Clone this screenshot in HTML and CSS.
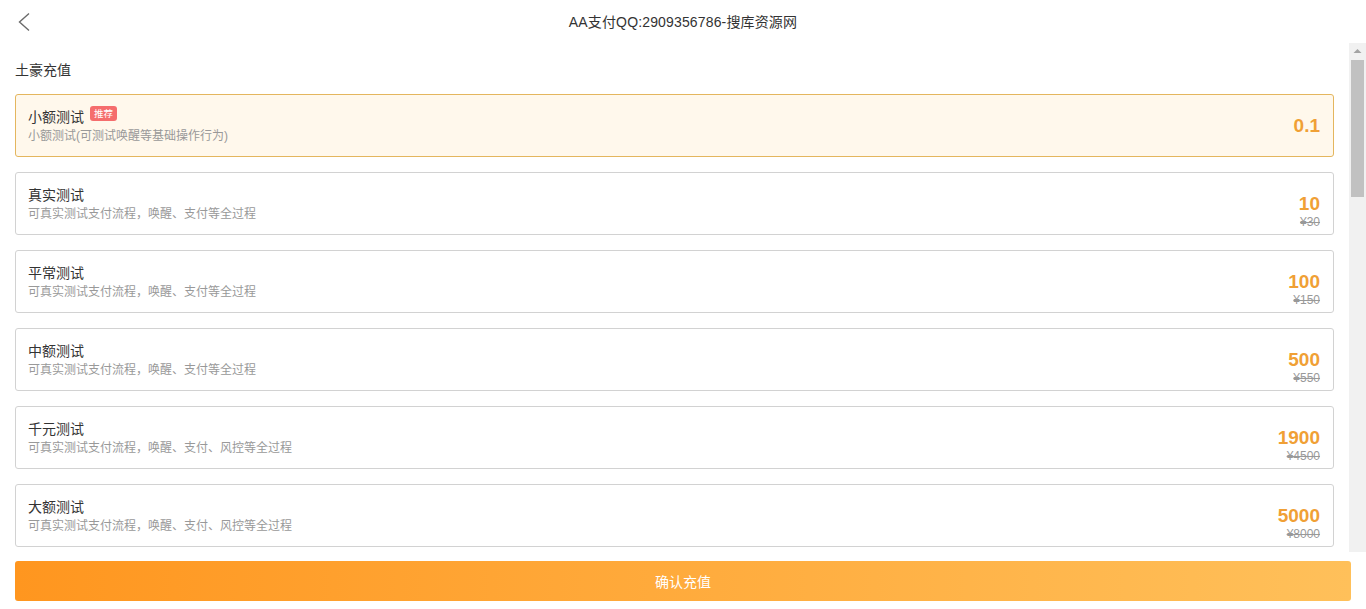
FILE: index.html
```html
<!DOCTYPE html>
<html lang="zh-CN">
<head>
<meta charset="utf-8">
<title>AA支付QQ:2909356786-搜库资源网</title>
<link rel="stylesheet" href="styles.css">
</head>
<body>
<div class="app">
  <header class="topbar">
    <a class="back" href="#">
      <svg width="14" height="20" viewBox="0 0 14 20"><polyline points="12,1.5 2.5,10 12,18.5" fill="none" stroke="#6b6b6b" stroke-width="1.4"/></svg>
    </a>
    <h1 class="title">AA支付QQ:2909356786-搜库资源网</h1>
    <span></span>
  </header>

  <div class="body-row">
    <main class="scroll">
      <section class="group">
        <h2 class="group-title">土豪充值</h2>
        <div class="card card-active">
          <div class="info">
            <div class="name">小额测试<span class="badge">推荐</span></div>
            <div class="desc">小额测试(可测试唤醒等基础操作行为)</div>
          </div>
          <div class="price-box"><div class="price">0.1</div></div>
        </div>
        <div class="card">
          <div class="info">
            <div class="name">真实测试</div>
            <div class="desc">可真实测试支付流程，唤醒、支付等全过程</div>
          </div>
          <div class="price-box has-old"><div class="price">10</div><div class="old">¥30</div></div>
        </div>
        <div class="card">
          <div class="info">
            <div class="name">平常测试</div>
            <div class="desc">可真实测试支付流程，唤醒、支付等全过程</div>
          </div>
          <div class="price-box has-old"><div class="price">100</div><div class="old">¥150</div></div>
        </div>
        <div class="card">
          <div class="info">
            <div class="name">中额测试</div>
            <div class="desc">可真实测试支付流程，唤醒、支付等全过程</div>
          </div>
          <div class="price-box has-old"><div class="price">500</div><div class="old">¥550</div></div>
        </div>
        <div class="card">
          <div class="info">
            <div class="name">千元测试</div>
            <div class="desc">可真实测试支付流程，唤醒、支付、风控等全过程</div>
          </div>
          <div class="price-box has-old"><div class="price">1900</div><div class="old">¥4500</div></div>
        </div>
        <div class="card">
          <div class="info">
            <div class="name">大额测试</div>
            <div class="desc">可真实测试支付流程，唤醒、支付、风控等全过程</div>
          </div>
          <div class="price-box has-old"><div class="price">5000</div><div class="old">¥8000</div></div>
        </div>
      </section>
    </main>
    <div class="scrollbar" aria-hidden="true">
      <div class="sb-up">
        <svg width="17" height="17" viewBox="0 0 17 17"><polygon points="4.5,10 8.5,6 12.5,10" fill="#a3a3a3"/></svg>
      </div>
      <div class="sb-thumb"></div>
    </div>
  </div>

  <footer class="footer">
    <button class="submit" type="button">确认充值</button>
  </footer>
</div>
</body>
</html>
```

FILE: styles.css
```css
* { box-sizing: border-box; }
html, body { margin: 0; padding: 0; height: 100%; background: #fff; }
body {
  font-family: "Liberation Sans", "Noto Sans CJK SC", sans-serif;
  color: #333;
}
.app {
  display: flex;
  flex-direction: column;
  height: 100vh;
}
.topbar {
  flex: 0 0 43px;
  display: grid;
  grid-template-columns: 60px 1fr 60px;
  align-items: center;
}
.back {
  display: flex;
  align-items: center;
  padding-left: 17px;
  height: 43px;
}
.title {
  margin: 0;
  text-align: center;
  font-size: 14px;
  font-weight: normal;
  color: #333;
  line-height: 20px;
  letter-spacing: 0.15px;
}
.body-row {
  flex: 1 1 auto;
  display: flex;
  min-height: 0;
}
.scroll {
  flex: 1 1 auto;
  overflow: hidden;
  padding: 0 15px;
}
.scrollbar {
  flex: 0 0 17px;
  background: #f1f1f1;
  display: flex;
  flex-direction: column;
}
.sb-up { height: 17px; }
.sb-up svg { display: block; }
.sb-thumb {
  height: 137px;
  margin: 0 2px;
  background: #c1c1c1;
}
.group { padding-top: 17px; }
.group-title {
  margin: 0 0 14px;
  font-size: 14px;
  font-weight: normal;
  line-height: 20px;
  color: #333;
}
.card {
  height: 63px;
  margin-bottom: 15px;
  border: 1px solid #d2d2d2;
  border-radius: 3px;
  background: #fff;
  display: flex;
  align-items: center;
  justify-content: space-between;
  padding: 0 13px 0 12px;
}
.card-active {
  background: #fff8ec;
  border-color: #e4b65e;
}
.info { display: flex; flex-direction: column; padding-top: 2px; }
.name {
  font-size: 14px;
  line-height: 17px;
  color: #333;
  display: flex;
  align-items: center;
}
.badge {
  display: inline-block;
  margin-left: 6px;
  margin-top: -7px;
  padding: 0 4px;
  height: 15px;
  line-height: 15px;
  font-size: 9.5px;
  color: #fff;
  background: #f56d6d;
  border-radius: 3px;
}
.desc {
  margin-top: 2px;
  font-size: 12px;
  line-height: 17px;
  color: #999;
}
.price-box {
  display: flex;
  flex-direction: column;
  align-items: flex-end;
}
.price-box.has-old { padding-top: 15px; }
.price {
  font-size: 19px;
  font-weight: bold;
  line-height: 22px;
  color: #f0a035;
}
.old {
  font-size: 12px;
  line-height: 15px;
  color: #999;
  text-decoration: line-through;
}
.footer {
  flex: 0 0 57px;
  padding: 9px 15px 8px;
}
.submit {
  display: block;
  width: 100%;
  height: 40px;
  border: 0;
  border-radius: 3px;
  background: linear-gradient(90deg, #ff961f 0%, #ffc05a 100%);
  color: #fff;
  font-family: "Liberation Sans", "Noto Sans CJK SC", sans-serif;
  font-size: 14px;
  cursor: pointer;
}
```
